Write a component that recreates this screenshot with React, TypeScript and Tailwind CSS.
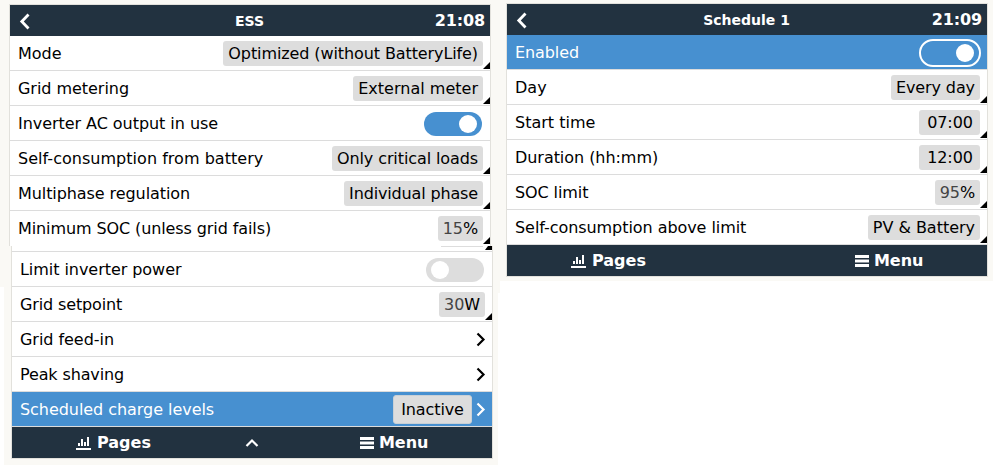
import type { ReactNode } from "react";

function Back() {
  return (
    <svg width="12" height="17" viewBox="0 0 12 17" fill="none" className="block">
      <path d="M9.500 1.500 2.800 8.500l6.700 7" stroke="white" strokeWidth="2.800" />
    </svg>
  );
}

function Header({ title, time }: { title: string; time: string }) {
  return (
    <div className="grid h-[31px] grid-cols-[80px_1fr_80px] items-center bg-[#223240] font-bold text-white">
      <div className="pt-px pl-[9px]">
        <Back />
      </div>
      <div className="pr-px text-center text-[14px] leading-[30px]">{title}</div>
      <div className="pr-[5px] text-right text-base leading-[31px] tracking-[-0.15px]">{time}</div>
    </div>
  );
}

function Footer({ up = false }: { up?: boolean }) {
  return (
    <div className="flex h-[31px] items-center bg-[#223240] text-base leading-[31px] font-bold text-white">
      <div className="flex w-[204px] items-center justify-end">
        <div className="flex w-[140px] items-center">
          <svg width="15" height="14" viewBox="0 0 15 14" fill="white" className="block" shapeRendering="crispEdges">
            <path d="M0 12h15v2H0zM2 7h2v3H2zM5 3h2v7H5zM8 6h2v4H8zM11 1h2v9h-2z" />
          </svg>
          <span className="ml-[6px]">Pages</span>
        </div>
      </div>
      <div className="flex w-[70px] justify-center pl-px">
        {up && (
          <svg width="14" height="10" viewBox="0 0 14 10" fill="none" className="block">
            <path d="M1.500 8 7 2.500 12.500 8" stroke="white" strokeWidth="2.200" />
          </svg>
        )}
      </div>
      <div className="flex items-center pl-[74px]">
        <svg width="14" height="12" viewBox="0 0 14 12" className="block" shapeRendering="crispEdges">
          <path d="M0 0h14v12H0z" fill="#8d949c" />
          <path d="M0 0h14v3H0zM0 5h14v2H0zM0 9h14v3H0z" fill="white" />
          <path d="M0 3h14v1H0zM0 8h14v1H0z" fill="#223240" />
        </svg>
        <span className="ml-[5px] tracking-[-0.05px]">Menu</span>
      </div>
    </div>
  );
}

type RowProps = {
  label: string;
  selected?: boolean;
  last?: boolean;
  tracking?: string;
  children?: ReactNode;
};

function Row({ label, selected = false, last = false, tracking = "", children }: RowProps) {
  return (
    <div
      className={
        "relative flex h-[35px] items-start justify-between border-b pl-2 text-base leading-[36px] " +
        (last ? "border-white " : "border-[#dcdcdc] ") +
        (selected ? "bg-[#4790d0] text-white" : "bg-white text-black")
      }
    >
      <span className={"h-[34px] whitespace-nowrap " + tracking}>{label}</span>
      {children}
    </div>
  );
}

type ChipProps = { children: ReactNode; wide?: boolean; tracking?: string };

function Chip({ children, wide = false, tracking = "tracking-[-0.1px]" }: ChipProps) {
  return (
    <>
      <span
        className={
          "mt-[5px] mr-[7px] h-[25px] rounded-[3px] bg-[#dddddd] text-center leading-[25px] whitespace-nowrap text-black " +
          (wide ? "w-[61px] pl-px " : "px-[5px] ") +
          tracking
        }
      >
        {children}
      </span>
      <svg width="7" height="7" viewBox="0 0 7 7" className="absolute right-0 bottom-px">
        <path d="M7 0v7H0z" fill="black" />
      </svg>
    </>
  );
}

function Toggle({ on }: { on: boolean }) {
  return (
    <span
      className={
        "mt-[6px] mr-2 flex h-6 w-[58px] items-center rounded-full px-[5px] " +
        (on ? "justify-end bg-[#4790d0]" : "bg-[#dddddd]")
      }
    >
      <span className="size-[18px] rounded-full bg-white" />
    </span>
  );
}

function Arrow({ light = false }: { light?: boolean }) {
  return (
    <svg width="10" height="15" viewBox="0 0 10 15" fill="none" className="mt-[10px] mr-[6px] block">
      <path d="M1.500 1.500 7.500 7.500l-6 6" stroke={light ? "white" : "black"} strokeWidth="2.200" />
    </svg>
  );
}

function EssScreen() {
  return (
    <div className="w-[500px]">
      <div className="h-[246px] bg-[#faf9f5] pt-1 pl-[9px]">
        <div className="h-[242px] w-[482px] overflow-hidden border border-b-0 border-[#e2e1dc]">
          <Header title="ESS" time="21:08" />
          <Row label="Mode">
            <Chip>Optimized (without BatteryLife)</Chip>
          </Row>
          <Row label="Grid metering" tracking="tracking-[-0.04px]">
            <Chip tracking="tracking-[0.02px]">External meter</Chip>
          </Row>
          <Row label="Inverter AC output in use" tracking="tracking-[-0.05px]">
            <Toggle on />
          </Row>
          <Row label="Self-consumption from battery" tracking="tracking-[0.03px]">
            <Chip>Only critical loads</Chip>
          </Row>
          <Row label="Multiphase regulation" tracking="tracking-[-0.08px]">
            <Chip tracking="tracking-[-0.15px]">Individual phase</Chip>
          </Row>
          <Row label="Minimum SOC (unless grid fails)" tracking="tracking-[-0.1px]" last>
            <Chip>
              <span className="text-[#444]">15</span>%
            </Chip>
          </Row>
        </div>
      </div>
      <div className="flex h-[219px]">
        <div className="h-[41px] w-1 bg-[#faf9f5]" />
        <div className="w-[494px] bg-[#faf9f5] pl-[7px]">
          <div className="w-[482px] border border-t-0 border-[#e2e1dc]">
            <div className="flex h-[6px] items-start justify-end border-b border-[#dcdcdc] bg-white">
              <span className="mr-[2px] h-px w-[42px] bg-[#dddddd]" />
              <svg width="7" height="4" viewBox="0 0 7 4" className="block">
                <path d="M3 0h4v4H0z" fill="black" />
              </svg>
            </div>
            <Row label="Limit inverter power" tracking="tracking-[-0.05px]">
              <Toggle on={false} />
            </Row>
            <Row label="Grid setpoint" tracking="tracking-[-0.13px]">
              <Chip>
                <span className="text-[#444]">30</span>W
              </Chip>
            </Row>
            <Row label="Grid feed-in" tracking="tracking-[-0.04px]">
              <Arrow />
            </Row>
            <Row label="Peak shaving" tracking="tracking-[-0.13px]">
              <Arrow />
            </Row>
            <Row label="Scheduled charge levels" tracking="tracking-[-0.05px]" selected>
              <span className="flex">
                <span className="mt-[3px] mr-1 h-[29px] w-[79px] rounded-[3px] border border-[#c9d0d6] bg-[#dddddd] text-center leading-[27px] tracking-[-0.1px] text-black">
                  Inactive
                </span>
                <Arrow light />
              </span>
            </Row>
            <Footer up />
          </div>
        </div>
        <div className="h-[47px] w-[2px] bg-[#faf9f5]" />
      </div>
    </div>
  );
}

function ScheduleScreen() {
  return (
    <div className="h-[281px] w-[493px] bg-[#faf9f5] pt-[3px] pl-[6px]">
      <div className="w-[482px] border border-[#e2e1dc]">
        <Header title="Schedule 1" time="21:09" />
        <Row label="Enabled" tracking="tracking-[-0.1px]" selected>
          <span className="mt-[4px] mr-[6px] flex h-[28px] w-[62px] items-center justify-end rounded-full border-2 border-white pr-[5px]">
            <span className="size-[18px] rounded-full bg-white" />
          </span>
        </Row>
        <Row label="Day">
          <Chip>Every day</Chip>
        </Row>
        <Row label="Start time">
          <Chip wide>07:00</Chip>
        </Row>
        <Row label="Duration (hh:mm)" tracking="tracking-[-0.05px]">
          <Chip wide>12:00</Chip>
        </Row>
        <Row label="SOC limit" tracking="tracking-[-0.1px]">
          <Chip>
            <span className="text-[#444]">95</span>%
          </Chip>
        </Row>
        <Row label="Self-consumption above limit" tracking="tracking-[-0.06px]">
          <Chip tracking="tracking-[-0.02px]">PV &amp; Battery</Chip>
        </Row>
        <Footer />
      </div>
    </div>
  );
}

export default function App() {
  return (
    <div className="flex h-[465px] w-[1001px] items-start overflow-hidden bg-white font-['DejaVu_Sans',sans-serif]">
      <EssScreen />
      <ScheduleScreen />
    </div>
  );
}
